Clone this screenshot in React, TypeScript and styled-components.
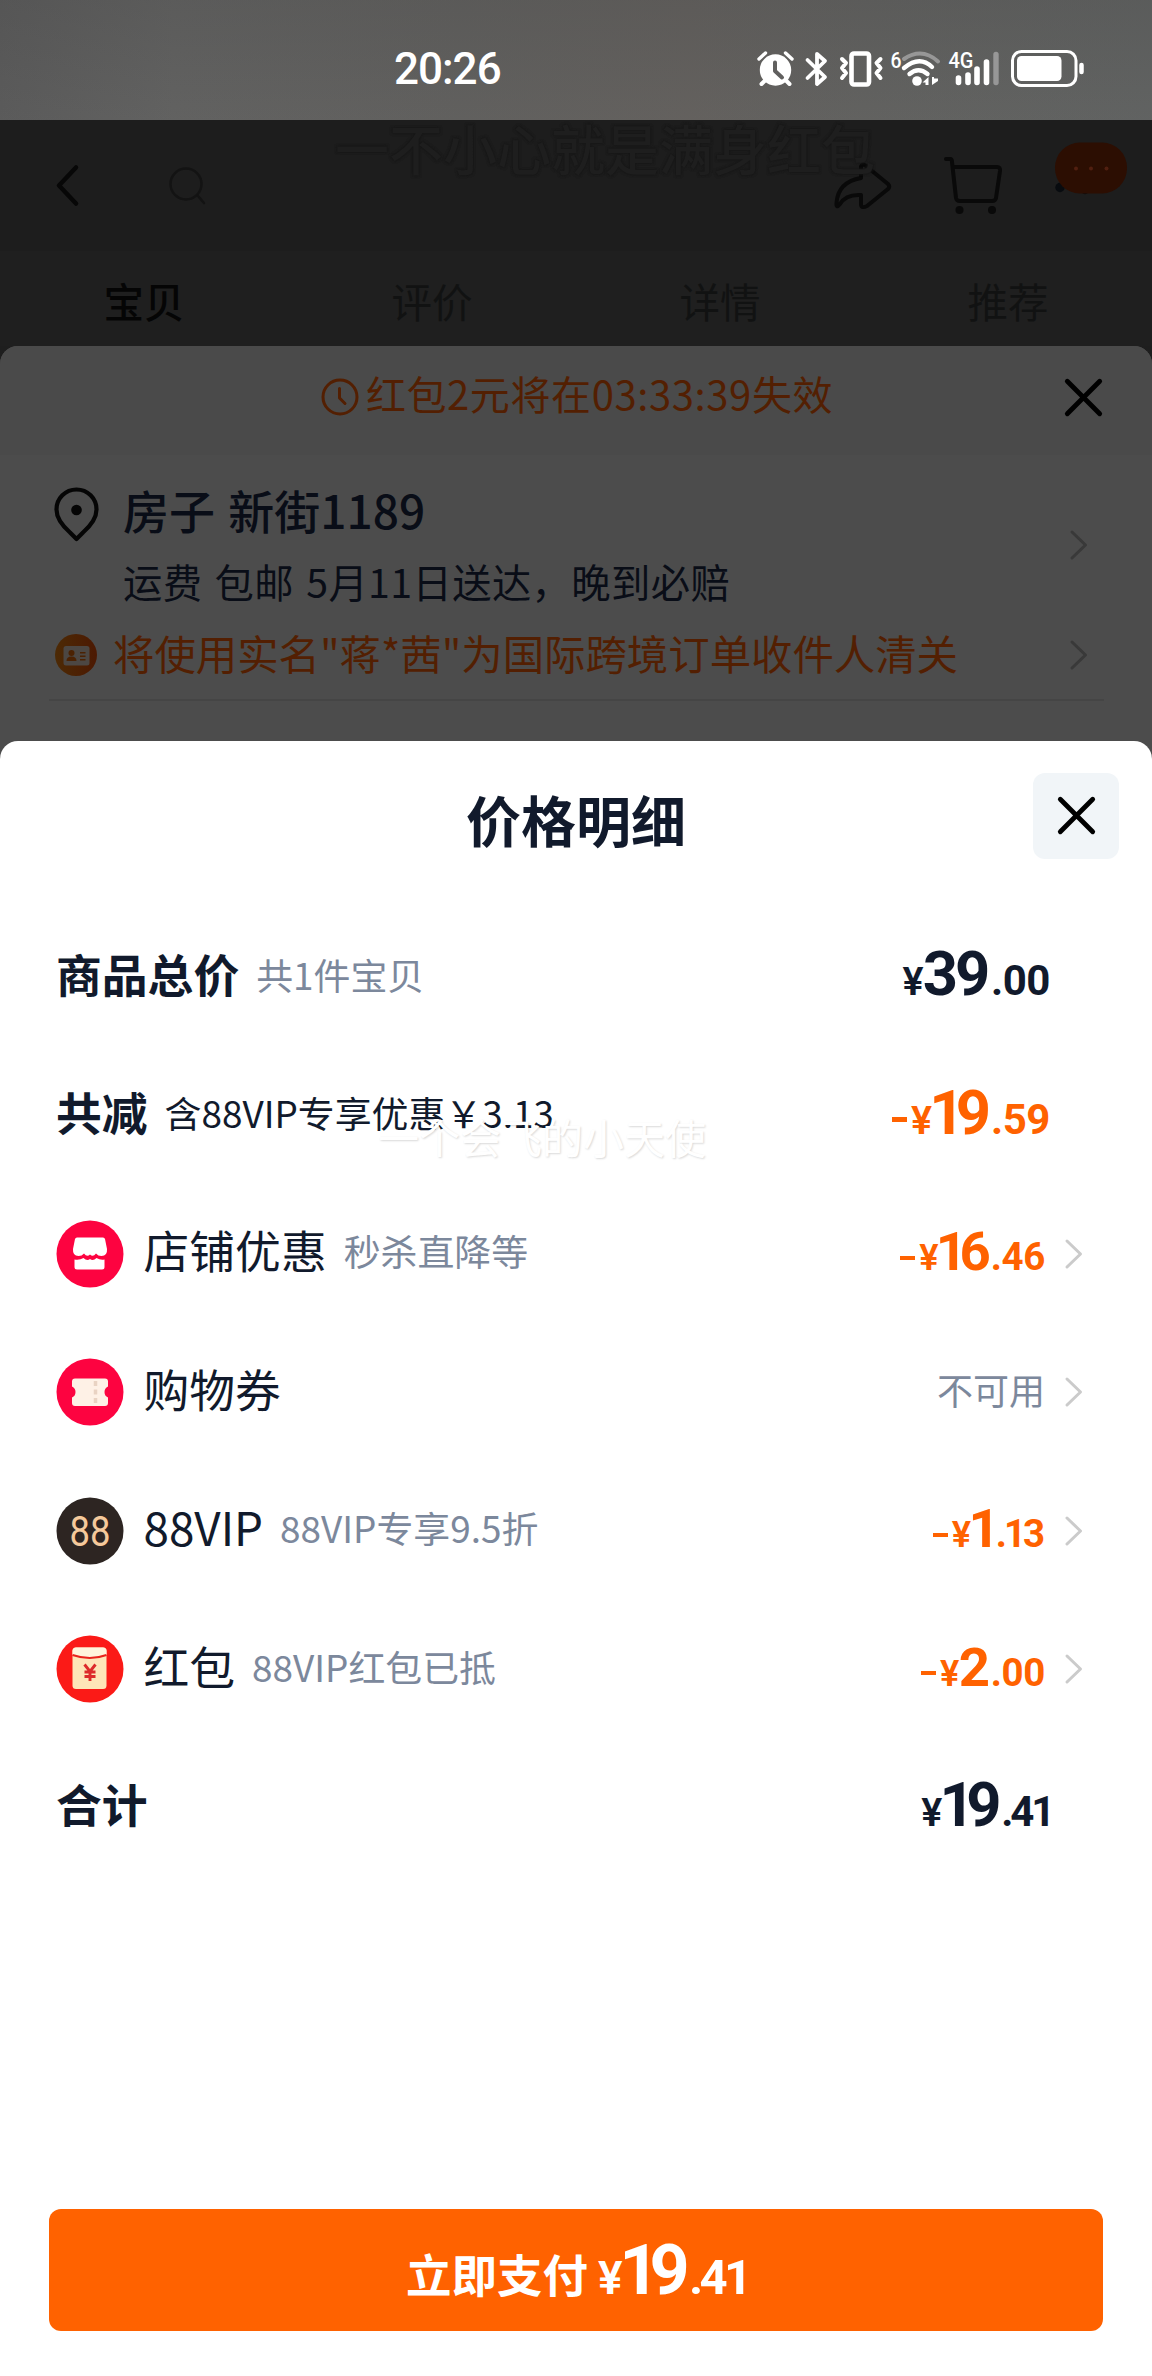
import React from "react";
import styled, { createGlobalStyle } from "styled-components";

const Global = createGlobalStyle`
  * { box-sizing: border-box; }
  body { margin: 0; background: #fff; }
  svg { display: block; flex: none; overflow: visible; }
`;

const CJK = `"Noto Sans CJK SC", "Noto Sans", sans-serif`;
const NUM = `Roboto, "Noto Sans CJK SC", sans-serif`;

const Page = styled.div`
  position: relative;
  width: 1152px;
  height: 2376px;
  overflow: hidden;
  display: flex;
  flex-direction: column;
  background: #1e1e1e;
  font-family: ${CJK};
  white-space: nowrap;
`;

const StatusBar = styled.header`
  flex: none;
  height: 120px;
  display: flex;
  align-items: center;
  padding: 17px 67px 0 394px;
  color: #fff;
  background:
    linear-gradient(180deg, rgba(80, 80, 80, 0.3), rgba(110, 110, 110, 0.12)),
    linear-gradient(90deg, #585858 0, #60605f 15%, #5f5e5c 40%, #625f5c 60%, #60605e 75%, #5f6160 100%);
`;

const Clock = styled.div`
  flex: 1;
  font: 500 44px/52px ${NUM};
  letter-spacing: -1px;
`;

const StatusIcons = styled.div`
  height: 38px;
  display: flex;
  align-items: center;
`;

const NavBar = styled.nav`
  flex: none;
  height: 131px;
  display: flex;
  align-items: center;
  padding: 0 25px 0 56px;
  background: #1d1d1d;
`;

const NavGap = styled.div<{ $w?: number }>`
  ${(p) => (p.$w ? `width: ${p.$w}px; flex: none;` : "flex: 1;")}
`;

const Watermark = styled.div<{ $x: number; $y: number; $size: number; $dark?: boolean }>`
  position: absolute;
  left: ${(p) => p.$x}px;
  top: ${(p) => p.$y}px;
  font-size: ${(p) => p.$size}px;
  line-height: 1;
  font-weight: ${(p) => (p.$dark ? 500 : 400)};
  color: ${(p) => (p.$dark ? "#1e1e1e" : "#fff")};
  text-shadow: ${(p) =>
    p.$dark ? "0 0 3px #161616, 0 0 3px #171717" : "1px 1px 2px rgba(0,0,0,.15)"};
  pointer-events: none;
`;

const Tabs = styled.div`
  flex: none;
  height: 95px;
  display: grid;
  grid-template-columns: repeat(4, 1fr);
  padding: 20px 0 0;
  background: #1f1f1f;
`;

const Tab = styled.div<{ $active?: boolean }>`
  text-align: center;
  font-size: 40.5px;
  line-height: 60px;
  font-weight: ${(p) => (p.$active ? 500 : 400)};
  color: ${(p) => (p.$active ? "#050505" : "#111212")};
`;

const OrderSheet = styled.section`
  flex: none;
  height: 395px;
  border-radius: 18px 18px 0 0;
  background: #4c4c4c;
  color: #090d17;
`;

const Notice = styled.div`
  height: 109px;
  display: grid;
  grid-template-columns: 1fr auto 1fr;
  align-items: center;
  padding: 0 50px 7px;
  border-radius: 18px 18px 0 0;
  background: #4a4a4a;
`;

const NoticeText = styled.div`
  grid-column: 2;
  display: flex;
  align-items: center;
  gap: 7px;
  font-size: 40px;
  line-height: 56px;
  color: #531f02;
  letter-spacing: 0.6px;
  margin-left: 2px;
  span { position: relative; top: -4px; }
`;

const NoticeClose = styled.div`
  justify-self: end;
`;

const Address = styled.div`
  display: flex;
  height: 159px;
  padding: 23px 64px 0 54px;
`;

const AddressText = styled.div`
  flex: 1;
  padding-left: 24px;
`;

const AddressTitle = styled.div`
  position: relative;
  top: -1px;
  font-size: 46px;
  line-height: 64px;
  font-weight: 500;
  word-spacing: 3px;
`;

const AddressSub = styled.div`
  margin-top: 10px;
  font-size: 39.3px;
  line-height: 58px;
  letter-spacing: 0.4px;
  word-spacing: 3px;
`;

const ChevronSlot = styled.div<{ $top?: number }>`
  padding-top: ${(p) => p.$top ?? 0}px;
`;

const RealName = styled.div`
  display: flex;
  align-items: center;
  height: 87px;
  margin: 0 48px 0 49px;
  padding: 0 16px 4px 6px;
  border-bottom: 2px solid #454545;
`;

const RealNameText = styled.div`
  position: relative;
  top: -3px;
  flex: 1;
  padding-left: 16px;
  font-size: 41.4px;
  line-height: 62px;
  color: #531f02;
`;

const SheetBackdrop = styled.div`
  flex: 1;
  display: flex;
  background: #4c4c4c;
`;

const PriceSheet = styled.section`
  flex: 1;
  display: flex;
  flex-direction: column;
  border-radius: 18px 18px 0 0;
  background: #fff;
  color: #111a2c;
`;

const SheetHead = styled.div`
  height: 167px;
  display: grid;
  grid-template-columns: 1fr auto 1fr;
  padding: 32px 33px 0;
`;

const SheetTitle = styled.h1`
  grid-column: 2;
  margin: 5px 0 0;
  font-size: 55px;
  line-height: 80px;
  font-weight: 700;
`;

const CloseButton = styled.button`
  justify-self: end;
  width: 86px;
  height: 86px;
  display: grid;
  place-items: center;
  padding: 0 0 2px;
  border: 0;
  border-radius: 12px;
  background: #f1f5f8;
`;

const Rows = styled.div`
  flex: 1;
`;

const Row = styled.div`
  display: flex;
  align-items: center;
  height: 138.4px;
  padding: 0 68px 0 56px;
`;

const RowIcon = styled.div`
  width: 87.5px;
`;

const Label = styled.div<{ $bold?: boolean }>`
  position: relative;
  top: -4.5px;
  font-size: 45.8px;
  line-height: 68px;
  font-weight: ${(p) => (p.$bold ? 700 : 400)};
`;

const Hint = styled.div<{ $dark?: boolean }>`
  position: relative;
  top: -3.5px;
  flex: 1;
  padding-left: 17px;
  font-size: 36.9px;
  line-height: 56px;
  color: ${(p) => (p.$dark ? "#111a2c" : "#7c889c")};
`;

const Unavailable = styled.div`
  position: relative;
  top: -3px;
  font-size: 36px;
  line-height: 54px;
  color: #7c889c;
`;

const Trail = styled.div<{ $wide?: boolean }>`
  padding-left: ${(p) => (p.$wide ? 20 : 0)}px;
  width: ${(p) => (p.$wide ? 39 : 34)}px;
`;

const Price = styled.div<{ $big: number; $small: number; $orange?: boolean }>`
  position: relative;
  top: 1px;
  display: flex;
  align-items: baseline;
  font-family: ${NUM};
  font-weight: 700;
  line-height: 70px;
  color: ${(p) => (p.$orange ? "#ff6200" : "inherit")};
  font-size: ${(p) => p.$small}px;
`;

const Minus = styled.i`
  width: 15px;
  height: 4.5px;
  margin-right: 4px;
  align-self: center;
  position: relative;
  top: 3px;
  background: currentColor;
`;

const Yen = styled.span`
  font-size: 0.94em;
  font-weight: 600;
  letter-spacing: -0.02em;
`;

/* The figure 1 carries wide side bearings, so numbers that hold it are set tighter. */
const Whole = styled.span<{ $size: number; $narrow: boolean; $single: boolean }>`
  font-size: ${(p) => p.$size}px;
  letter-spacing: ${(p) => (p.$narrow ? -0.14 : -0.05)}em;
  margin-left: ${(p) => (p.$narrow ? -0.035 : 0)}em;
  margin-right: ${(p) => (p.$narrow && !p.$single ? 0.095 : 0.02)}em;
  position: relative;
`;

const Cents = styled.span<{ $narrow: boolean; $endsNarrow: boolean }>`
  margin-left: 2.5px;
  letter-spacing: ${(p) => (p.$narrow ? -0.075 : -0.01)}em;
  margin-right: ${(p) => (p.$endsNarrow ? -0.05 : p.$narrow ? 0.07 : 0)}em;
`;

const PayBar = styled.div`
  flex: none;
  height: 167px;
  padding: 0 49px;
`;

const PayButton = styled.button`
  width: 100%;
  height: 122px;
  display: flex;
  justify-content: center;
  align-items: baseline;
  padding: 25px 0 0;
  border: 0;
  border-radius: 12px;
  background: #ff6200;
  color: #fff;
`;

const PayLabel = styled.span`
  position: relative;
  margin-right: 10px;
  font: 700 45.5px/68px ${CJK};
`;

const Chevron = ({ color = "#cbcbcb" }: { color?: string }) => (
  <svg width="18" height="30" viewBox="0 0 18 30" fill="none" stroke={color} strokeWidth="3" strokeLinecap="round" strokeLinejoin="round">
    <path d="M2 2 15.5 15 2 28" />
  </svg>
);

const Cross = () => (
  <svg width="37" height="37" viewBox="0 0 37 37" fill="none" stroke="#000" strokeWidth="4.8" strokeLinecap="round">
    <path d="M2.3 2.3 34.7 34.7M34.7 2.3 2.3 34.7" />
  </svg>
);

interface AmountProps {
  value: string;
  minus?: boolean;
  big: number;
  small: number;
}

const Amount = ({ value, minus, big, small }: AmountProps) => {
  const [whole, cents] = value.split(".");
  return (
    <Price $big={big} $small={small} $orange={minus}>
      {minus && <Minus />}
      <Yen>¥</Yen>
      <Whole $size={big} $narrow={whole.startsWith("1")} $single={whole.length === 1}>
        {whole}
      </Whole>
      <Cents $narrow={cents.includes("1")} $endsNarrow={cents.endsWith("1")}>
        .{cents}
      </Cents>
    </Price>
  );
};

const StatusGlyphs = () => (
  <svg width="328" height="38" viewBox="0 0 328 38" fill="none" stroke="#fff" strokeLinecap="round" strokeLinejoin="round">
    <g transform="translate(0 1)">
      <circle cx="18.5" cy="19" r="15.7" fill="#fff" stroke="none" />
      <path d="M2 8 8.5 2M35 8 28.5 2" strokeWidth="3.4" />
      <path d="M8.5 29 4.500 33M28.5 29 32.5 33" strokeWidth="4" />
      <path d="M18 11.5V20L25 26.5" stroke="#61605f" strokeWidth="4" />
    </g>
    <path d="M50.5 10 68 27 60 34V4L68 11 50.5 28" strokeWidth="3.8" />
    <rect x="94.500" y="3.5" width="17.5" height="31" rx="2.5" strokeWidth="4.6" />
    <path d="M85 9 89 13 85 18 89 23 85 28M123.5 9 119.5 13 123.5 18 119.5 23 123.5 28" strokeWidth="4" />
    <path d="M147 9Q165 -3 181 11.5" stroke="#979797" strokeWidth="4" />
    <path d="M147 18Q162.500 5 175 17" strokeWidth="4.4" />
    <path d="M152.5 24Q161.500 16.5 170.5 24" strokeWidth="4.4" />
    <circle cx="160" cy="31" r="4.8" fill="#fff" stroke="none" />
    <path d="M171.500 35V27L165.500 32.500H168.500V35ZM175 27V35L181 31V28.500H177V27Z" fill="#fff" stroke="none" />
    <text x="133.5" y="17.5" fill="#fff" stroke="none" fontFamily="Roboto" fontWeight="500" fontSize="22" textLength="11" lengthAdjust="spacingAndGlyphs">6</text>
    <text x="191.5" y="18" fill="#fff" stroke="none" fontFamily="Roboto" fontWeight="500" fontSize="22.5" textLength="25" lengthAdjust="spacingAndGlyphs">4G</text>
    <path d="M201.5 28V32.5M211 25V32.5M220 19V32.5M229.5 12V32.5" strokeWidth="5.6" />
    <path d="M239 4.500V32.5" stroke="#979797" strokeWidth="5.4" />
    <rect x="255.5" y="1.5" width="63.5" height="34" rx="9" strokeWidth="3" />
    <rect x="260" y="6" width="44.5" height="25" rx="4.5" fill="#fff" stroke="none" />
    <path d="M324.5 15V22" strokeWidth="4.5" />
  </svg>
);

const ShopIcon = () => (
  <svg width="68" height="68" viewBox="0 0 68 68">
    <circle cx="34" cy="34" r="33.5" fill="#fd0340" />
    <path d="M21 17.500h26q1.500 0 2 1.500l2 10q.5 7-5.500 7-3.500 0-5.500-2.500-3 4-6 1-3 3-6-1-2 2.500-5.500 2.500-6 0-5.500-7l2-10q.5-1.500 2-1.500Z" fill="#fff" />
    <path d="M18.5 39.500q5 1 9-1.500 3.500 3.500 6.500 1 3 2.500 6.500-1 4 2.500 8 1.500V47q0 2.500-2.500 2.500H21q-2.500 0-2.500-2.500Z" fill="#fff" />
  </svg>
);

const CouponIcon = () => (
  <svg width="68" height="68" viewBox="0 0 68 68">
    <circle cx="34" cy="34" r="33.5" fill="#fd0340" />
    <path d="M19 20.500h30q3 0 3 3v5q-3.500 1.500-3.500 5.500t3.500 5.500V45q0 3-3 3H19q-3 0-3-3v-5.500q3.500-1.500 3.500-5.500T16 28.500v-5q0-3 3-3Z" fill="#fef1e6" />
    <path d="M39.500 23v5M39.500 31.500v5M39.500 40v5" stroke="#e9d3c3" strokeWidth="3.5" />
  </svg>
);

const VipIcon = () => (
  <svg width="68" height="68" viewBox="0 0 68 68">
    <circle cx="34" cy="34" r="33.5" fill="#2d2522" />
    <text x="34" y="48.5" textAnchor="middle" fontFamily="Roboto" fontSize="43" fill="#f5c99b" textLength="41" lengthAdjust="spacingAndGlyphs">88</text>
  </svg>
);

const PacketIcon = () => (
  <svg width="68" height="68" viewBox="0 0 68 68">
    <circle cx="34" cy="34" r="33.5" fill="#fb1a17" />
    <rect x="16.5" y="12.5" width="34" height="41.5" rx="3.5" fill="#fee5b8" />
    <path d="M16.5 20V16q0-3.500 3.500-3.500h27q3.500 0 3.500 3.500v4Q34 26 16.500 20Z" fill="#fff4dc" />
    <path d="M16.5 20Q34 26 50.500 20" fill="none" stroke="#e8231c" strokeWidth="2" />
    <path d="m28.500 29.500 5.500 7 5.500-7M34 36.500V46M28.500 37h11M28.500 41.500h11" fill="none" stroke="#dd2b2b" strokeWidth="2.9" />
  </svg>
);

const rows = [
  { label: "商品总价", hint: "共1件宝贝", value: "39.00", total: true },
  { label: "共减", hint: "含88VIP专享优惠￥3.13", value: "19.59", total: true, minus: true, dark: true },
  { label: "店铺优惠", hint: "秒杀直降等", value: "16.46", minus: true, icon: <ShopIcon /> },
  { label: "购物券", hint: "", value: "", icon: <CouponIcon /> },
  { label: "88VIP", hint: "88VIP专享9.5折", value: "1.13", minus: true, icon: <VipIcon /> },
  { label: "红包", hint: "88VIP红包已抵", value: "2.00", minus: true, icon: <PacketIcon /> },
  { label: "合计", hint: "", value: "19.41", total: true },
];

export default function App() {
  return (
    <Page>
      <Global />
      <StatusBar>
        <Clock>20:26</Clock>
        <StatusIcons>
          <StatusGlyphs />
        </StatusIcons>
      </StatusBar>

      <NavBar>
        <svg width="23" height="41" viewBox="0 0 23 41" fill="none" stroke="#070707" strokeWidth="4.5" strokeLinecap="round" strokeLinejoin="round">
          <path d="M20 2.500 3 20.500 20 38.500" />
        </svg>
        <NavGap $w={90} />
        <svg width="37" height="37" viewBox="0 0 37 37" fill="none" stroke="#131313" strokeWidth="2.5" strokeLinecap="round">
          <circle cx="17" cy="17" r="15.5" />
          <path d="m29 29 6 7" />
        </svg>
        <NavGap />
        <svg width="58" height="48" viewBox="0 0 58 48" fill="none" stroke="#090909" strokeWidth="4" strokeLinejoin="round">
          <path d="M27 4.500Q28 1 32 4L54 22Q56.500 24.500 54 27L33 44Q27 47 27 42V33Q12 32 6 42 2 47 2.500 41 4 20 27 16Z" />
        </svg>
        <NavGap $w={52} />
        <svg width="58" height="58" viewBox="0 0 58 58" fill="none" stroke="#090909" strokeWidth="4" strokeLinecap="round" strokeLinejoin="round">
          <path d="M2 2h4q2 0 2 3l4 36q.5 3 4 3h32q3.500 0 4-3l4-27q.5-4-3-4H9" />
          <circle cx="15.5" cy="53" r="4" fill="#090909" stroke="none" />
          <circle cx="48" cy="53" r="4" fill="#090909" stroke="none" />
        </svg>
        <NavGap $w={52} />
        <svg width="73" height="86" viewBox="0 0 73 86">
          <circle cx="6" cy="44.5" r="4.7" fill="#080b0f" />
          <circle cx="31" cy="46.5" r="4.7" fill="#080b0f" />
          <rect x="1" y="-.5" width="72" height="51" rx="25" fill="#2c0e02" />
          <g fill="#511f10">
            <circle cx="22" cy="25.500" r="2" />
            <circle cx="37" cy="25.500" r="2" />
            <circle cx="52.5" cy="25.500" r="2" />
          </g>
        </svg>
      </NavBar>
      <Tabs>
        <Tab $active>宝贝</Tab>
        <Tab>评价</Tab>
        <Tab>详情</Tab>
        <Tab>推荐</Tab>
      </Tabs>
      <Watermark $x={335} $y={121} $size={54} $dark>一不小心就是满身红包</Watermark>

      <OrderSheet>
        <Notice>
          <NoticeText>
            <svg width="38" height="38" viewBox="0 0 38 38" fill="none" stroke="#531f02" strokeWidth="3" strokeLinecap="round" strokeLinejoin="round">
              <circle cx="19" cy="19" r="17" />
              <path d="M18.5 10.500V20l5.500 5.500" />
            </svg>
            <span>红包2元将在03:33:39失效</span>
          </NoticeText>
          <NoticeClose>
            <Cross />
          </NoticeClose>
        </Notice>
        <Address>
          <svg width="45" height="74" viewBox="0 0 45 74" fill="none" stroke="#050505" strokeWidth="4.2" strokeLinejoin="round">
            <path d="M22.5 61Q19.500 58 16 54.500 2.500 42.500 2.500 31.500a20 20 0 0 1 40 0Q42.500 42.500 29 54.500 25.500 58 22.500 61Z" />
            <circle cx="22.5" cy="32" r="5.300" fill="#050505" stroke="none" />
          </svg>
          <AddressText>
            <AddressTitle>房子 新街1189</AddressTitle>
            <AddressSub>运费 包邮 5月11日送达，晚到必赔</AddressSub>
          </AddressText>
          <ChevronSlot $top={52}>
            <Chevron color="#393939" />
          </ChevronSlot>
        </Address>
        <RealName>
          <svg width="42" height="42" viewBox="0 0 42 42">
            <defs>
              <linearGradient id="badge" x1="0" y1="0" x2="1" y2="0">
                <stop offset="0" stopColor="#4c2a05" />
                <stop offset="1" stopColor="#4c1902" />
              </linearGradient>
            </defs>
            <circle cx="21" cy="21" r="21" fill="url(#badge)" />
            <rect x="8.5" y="12" width="26" height="19.500" rx="2.5" fill="#4c4743" />
            <circle cx="16.5" cy="19" r="3" fill="#4b2203" />
            <path d="M11.5 27q0-4.500 5-4.500t5 4.500ZM25 18h5.500v1.500H25ZM25 21.500h5.500V23H25ZM25 25h5.500v1.500H25Z" fill="#4b2203" />
          </svg>
          <RealNameText>将使用实名"蒋*茜"为国际跨境订单收件人清关</RealNameText>
          <Chevron color="#393939" />
        </RealName>
      </OrderSheet>

      <SheetBackdrop>
        <PriceSheet>
          <SheetHead>
            <SheetTitle>价格明细</SheetTitle>
            <CloseButton aria-label="关闭">
              <Cross />
            </CloseButton>
          </SheetHead>
          <Rows>
            {rows.map((r) => (
              <Row key={r.label}>
                {r.icon && <RowIcon>{r.icon}</RowIcon>}
                <Label $bold={r.total}>{r.label}</Label>
                <Hint $dark={r.dark}>{r.hint}</Hint>
                {r.value ? (
                  <Amount value={r.value} minus={r.minus} big={r.total ? 61.5 : 54.5} small={r.total ? 42 : 38.5} />
                ) : (
                  <Unavailable>不可用</Unavailable>
                )}
                <Trail $wide={!!r.icon}>{r.icon && <Chevron />}</Trail>
              </Row>
            ))}
          </Rows>
          <PayBar>
            <PayButton>
              <PayLabel>立即支付</PayLabel>
              <Amount value="19.41" big={70} small={49} />
            </PayButton>
          </PayBar>
        </PriceSheet>
      </SheetBackdrop>
      <Watermark $x={378} $y={1116} $size={41}>一个会飞的小天使</Watermark>
    </Page>
  );
}
